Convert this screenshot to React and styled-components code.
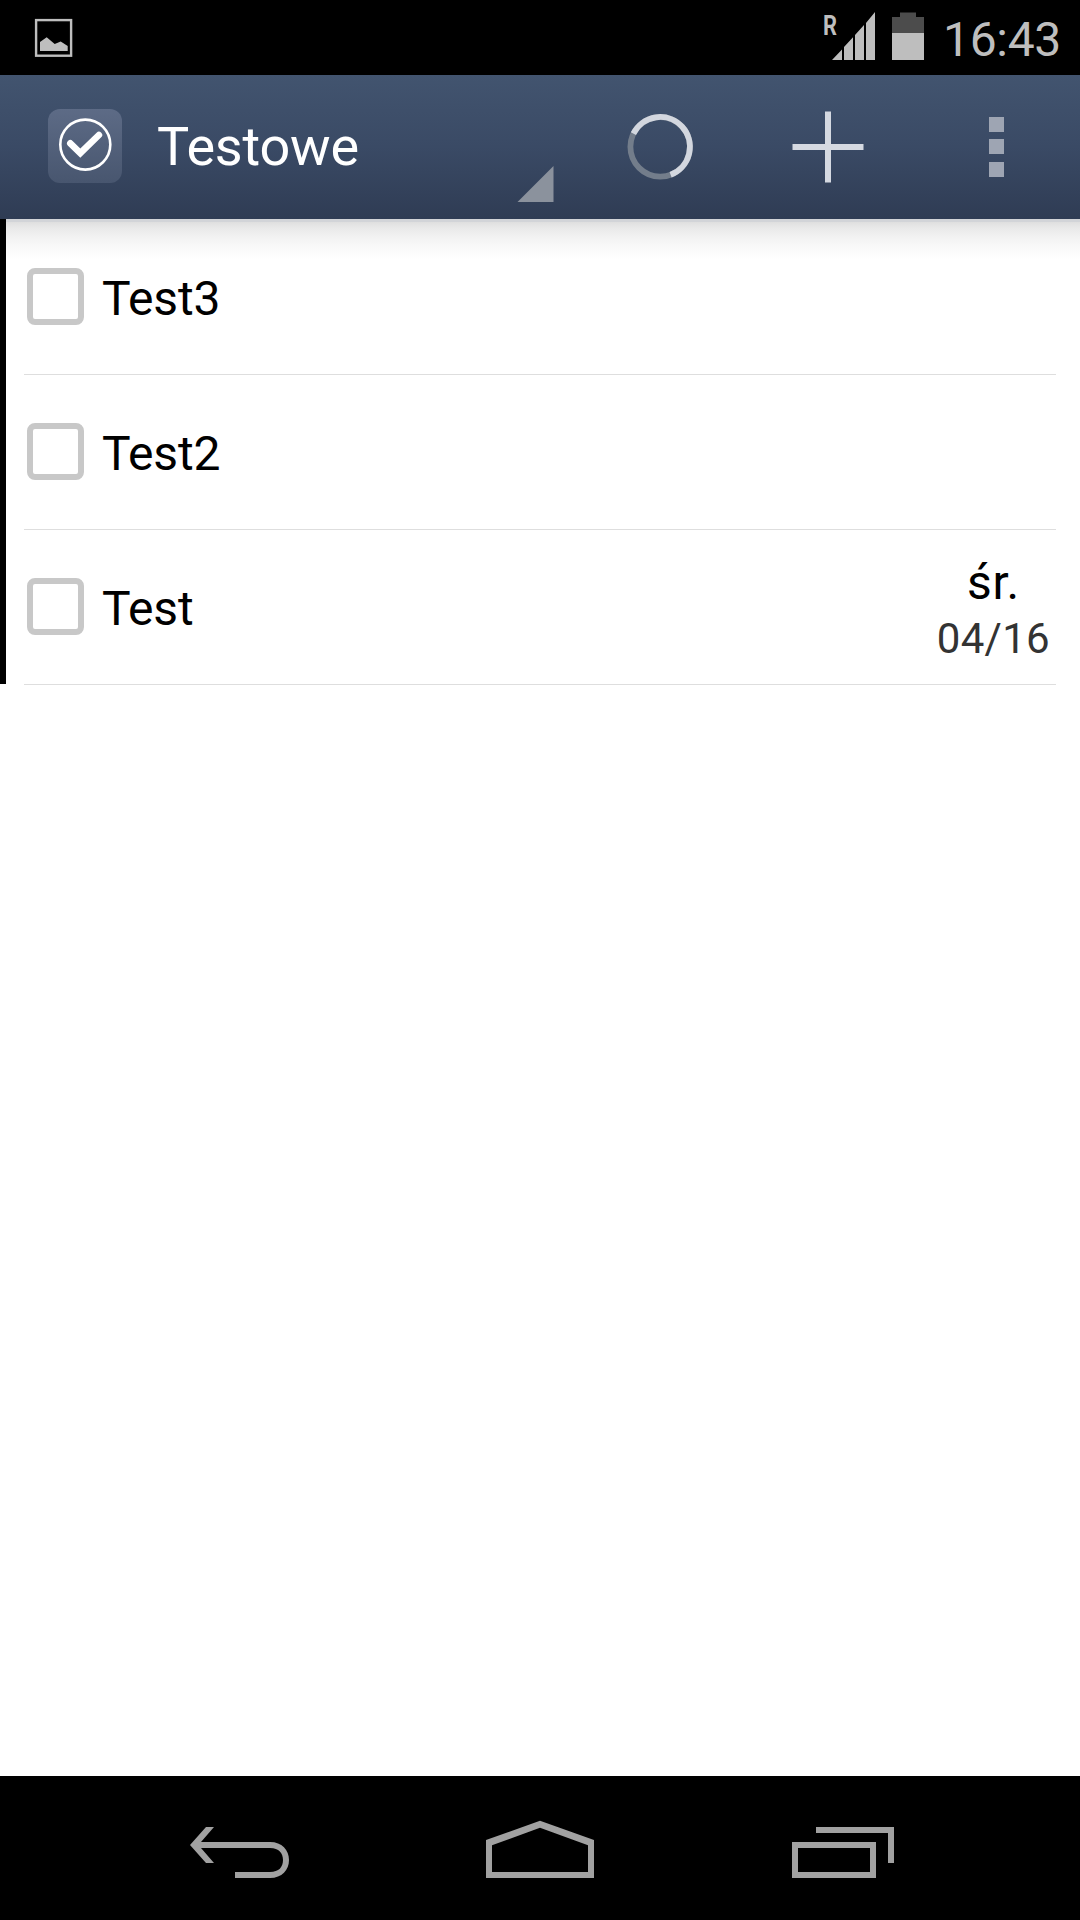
import React from "react";
import styled, { createGlobalStyle } from "styled-components";

const GlobalStyle = createGlobalStyle`
  * { box-sizing: border-box; }
  body { margin: 0; background: #fff; font-family: Roboto, "Noto Sans", sans-serif; }
  svg { display: block; flex: none; }
`;

const Screen = styled.div`
  width: 1080px;
  height: 1920px;
  display: flex;
  flex-direction: column;
  background: #fff;
  overflow: hidden;
`;

const StatusBar = styled.header`
  height: 75px;
  flex: none;
  display: flex;
  justify-content: space-between;
  background: #000;
  padding: 0 20px 0 33px;
`;

const StatusGroup = styled.div`
  display: flex;
`;

const Carrier = styled.span`
  width: 8px;
  height: 32px;
  margin-top: 10px;
  color: #bebebe;
  font-size: 28px;
  font-weight: 700;
  line-height: 32px;
  transform: scaleX(0.78);
  transform-origin: 0 0;
`;

const Clock = styled.time`
  width: 117px;
  padding-top: 2px;
  margin-left: 18px;
  color: #bebebe;
  font-size: 48px;
  line-height: 75px;
  white-space: nowrap;
  letter-spacing: ${(p) => p.$tracking}px;
`;

const AppBar = styled.nav`
  height: 144px;
  flex: none;
  display: flex;
  background: linear-gradient(#42546f, #3a4a65 50%, #2f3c54);
`;

const ListPicker = styled.button`
  flex: 1;
  display: flex;
  border: 0;
  padding: 0 22px 0 48px;
  background: none;
  font: inherit;
  text-align: left;
`;

const AppIcon = styled.span`
  width: 74px;
  height: 74px;
  margin-top: 34px;
  border-radius: 12px;
  background: linear-gradient(#5d6b86, #48566f);
`;

const Title = styled.span`
  flex: 1;
  margin-left: 35px;
  color: #fff;
  font-size: 54px;
  line-height: 144px;
  letter-spacing: ${(p) => p.$tracking}px;
`;

const Caret = styled.svg`
  align-self: flex-end;
  margin-bottom: 17px;
`;

const Action = styled.button`
  width: 168px;
  border: 0;
  padding: 0;
  display: flex;
  align-items: center;
  justify-content: center;
  background: none;
`;

const Content = styled.main`
  flex: 1;
  display: flex;
  align-items: flex-start;
`;

const ColorStrip = styled.div`
  width: 6px;
  height: 465px;
  background: #000;
`;

const TaskList = styled.ul`
  flex: 1;
  margin: 0;
  padding: 1px 24px 0 18px;
  list-style: none;
  background: linear-gradient(
      #d2d4d8 0 3px,
      #dfdfdf 3px,
      #e9e9e9 9px,
      #f2f2f2 18px,
      #f9f9f9 28px,
      #fff 40px
    ) no-repeat 0 0 / 100% 40px;
`;

const Task = styled.li`
  height: 155px;
  display: flex;
  border-bottom: 1px solid #dedede;
  padding: 0 6px 0 3px;
`;

const Checkbox = styled.span`
  width: 57px;
  height: 57px;
  margin-top: 48px;
  border: 6px solid #c8c8c8;
  border-radius: 8px;
  background: #fff;
`;

const TaskName = styled.span`
  flex: 1;
  margin-left: 18px;
  padding-top: 2px;
  color: #000;
  font-size: 48px;
  line-height: 154px;
  letter-spacing: ${(p) => p.$tracking}px;
`;

const Due = styled.div`
  display: flex;
  flex-direction: column;
  align-items: center;
  padding-top: 24px;
`;

const DueDay = styled.span`
  color: #000;
  font-size: 48px;
  line-height: 57px;
  letter-spacing: ${(p) => p.$tracking}px;
`;

const DueDate = styled.span`
  margin-top: 3px;
  color: #333;
  font-size: 42px;
  line-height: 49px;
  letter-spacing: ${(p) => p.$tracking}px;
`;

const NavBar = styled.footer`
  height: 144px;
  flex: none;
  display: flex;
  justify-content: center;
  background: #000;
`;

const NavKey = styled.button`
  width: 300px;
  border: 0;
  padding: 0;
  display: flex;
  justify-content: center;
  background: none;
`;

const tasks = [
  { name: "Test3" },
  { name: "Test2" },
  { name: "Test", day: "śr.", date: "04/16" },
];

const PictureIcon = () => (
  <svg width="42" height="75" viewBox="33 0 42 75">
    <rect x="36.1" y="20.1" width="35" height="35.6" fill="none" stroke="#bebebe" strokeWidth="2.4" />
    <path d="M40 42l6.7-4.7 8 6.7 6-2.5 7 4.5v5H40z" fill="#bebebe" />
  </svg>
);

const SignalIcon = () => (
  <svg width="60" height="75" viewBox="831 0 60 75">
    <path d="M832 60L842 49.5V60zM844 60V47L853 37.3V60zM855 60V35L864 25V60zM866 60V23L875 12V60z" fill="#bebebe" />
  </svg>
);

const BatteryIcon = () => (
  <svg width="34" height="75" viewBox="891 0 34 75">
    <path d="M892 33V17h8v-4.5h16V17h8v16z" fill="#4c4c4c" />
    <path d="M892 33h32v27h-32z" fill="#bebebe" />
  </svg>
);

const CheckCircle = () => (
  <svg width="74" height="74" viewBox="48 109 74 74">
    <circle cx="85.3" cy="144.6" r="25" fill="none" stroke="#fff" strokeWidth="2.6" />
    <path d="M70.3 143.3l10 9.9L98.9 135" fill="none" stroke="#fff" strokeWidth="6.6" strokeLinecap="round" />
  </svg>
);

const ProgressIcon = () => (
  <svg width="68" height="68" viewBox="626 113 68 68">
    <circle cx="660.2" cy="146.8" r="29.8" fill="none" stroke="#737d8b" strokeWidth="5.8" />
    <path d="M633.4 133.6A29.8 29.8 0 1 1 670.6 174.7" fill="none" stroke="#d3d7df" strokeWidth="5.8" />
  </svg>
);

const PlusIcon = () => (
  <svg width="72" height="72" viewBox="792 111 72 72">
    <path d="M828 111.6v71M792.5 147h71" stroke="#d5d9e1" strokeWidth="6" />
  </svg>
);

const MoreIcon = () => (
  <svg width="18" height="60" viewBox="987 117 18 60">
    <path d="M989 117h15v15h-15zM989 139h15v15h-15zM989 162h15v15h-15z" fill="#9ea5b3" />
  </svg>
);

const BackIcon = () => (
  <svg width="120" height="144" viewBox="180 1776 120 144">
    <path d="M190 1845l16-18h8l-13 15h69c12 0 19 8 19 18s-7 18-19 18h-35v-6h35c9 0 13-5 13-12s-4-12-13-12h-69l13 15h-8z" fill="#a1a1a1" />
  </svg>
);

const HomeIcon = () => (
  <svg width="120" height="144" viewBox="480 1776 120 144">
    <path d="M486 1840l54-19.2 54 19.2v38H486zM492 1845.2V1872h96v-26.8l-48-17.4z" fill="#a1a1a1" fillRule="evenodd" />
  </svg>
);

const RecentsIcon = () => (
  <svg width="120" height="144" viewBox="780 1776 120 144">
    <path d="M795 1845h78v30h-78zM816 1830h75v33" fill="none" stroke="#a1a1a1" strokeWidth="6" />
  </svg>
);

export default function App() {
  return (
    <Screen>
      <GlobalStyle />
      <StatusBar>
        <PictureIcon />
        <StatusGroup>
          <Carrier>R</Carrier>
          <SignalIcon />
          <BatteryIcon />
          <Clock $tracking={-0.3}>16:43</Clock>
        </StatusGroup>
      </StatusBar>
      <AppBar>
        <ListPicker>
          <AppIcon>
            <CheckCircle />
          </AppIcon>
          <Title $tracking={-0.2}>Testowe</Title>
          <Caret width="37" height="37" viewBox="0 0 37 37">
            <path d="M0.5 37L36.5 1V37z" fill="#8b929d" />
          </Caret>
        </ListPicker>
        <Action aria-label="Odśwież"><ProgressIcon /></Action>
        <Action aria-label="Dodaj"><PlusIcon /></Action>
        <Action aria-label="Menu"><MoreIcon /></Action>
      </AppBar>
      <Content>
        <ColorStrip />
        <TaskList>
          {tasks.map((task) => (
            <Task key={task.name}>
              <Checkbox />
              <TaskName $tracking={-0.2}>{task.name}</TaskName>
              {task.date && (
                <Due>
                  <DueDay $tracking={0.6}>{task.day}</DueDay>
                  <DueDate $tracking={0.3}>{task.date}</DueDate>
                </Due>
              )}
            </Task>
          ))}
        </TaskList>
      </Content>
      <NavBar>
        <NavKey aria-label="Wstecz"><BackIcon /></NavKey>
        <NavKey aria-label="Ekran główny"><HomeIcon /></NavKey>
        <NavKey aria-label="Ostatnie"><RecentsIcon /></NavKey>
      </NavBar>
    </Screen>
  );
}
